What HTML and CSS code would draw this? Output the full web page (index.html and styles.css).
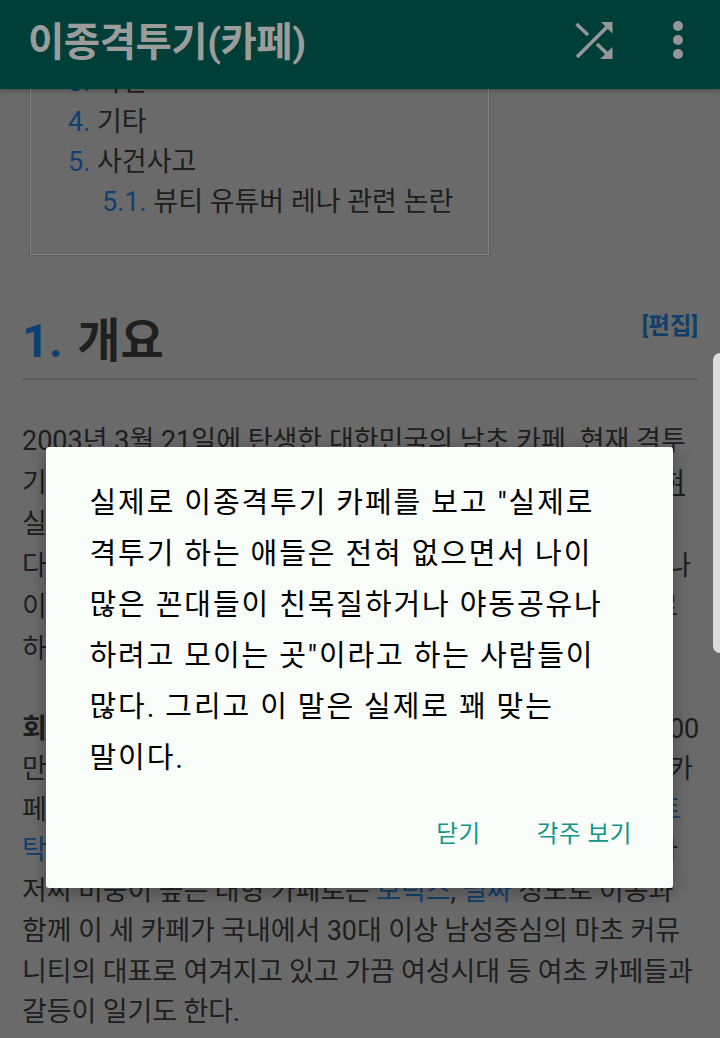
FILE: index.html
```html
<!DOCTYPE html>
<html lang="ko">
<head>
<meta charset="utf-8">
<title>이종격투기(카페)</title>
<link rel="stylesheet" href="styles.css">
</head>
<body>
<div class="screen">
  <header class="appbar">
    <h1 class="appbar-title">이종격투기(카페)</h1>
    <div class="appbar-actions">
      <svg class="icon-shuffle" viewBox="0 0 38 38" width="38" height="38" aria-hidden="true">
        <path d="M1.5 3 L13 14 M2 36 L33 5 M22 23 L33 33.5" fill="none" stroke="#969696" stroke-width="3.6"/>
        <path d="M26 1 H37.5 V12.5 Z M37.5 26 V38 H25 Z" fill="#969696"/>
      </svg>
      <div class="dots"><span></span><span></span><span></span></div>
    </div>
  </header>
  <main class="article">
    <nav class="toc">
      <div class="toc-row toc-cut"><span class="num">3.</span> 사건</div>
      <div class="toc-row"><span class="num">4.</span> 기타</div>
      <div class="toc-row"><span class="num">5.</span> 사건사고</div>
      <div class="toc-row toc-sub"><span class="num">5.1.</span> 뷰티 유튜버 레나 관련 논란</div>
    </nav>
    <div class="heading">
      <h2 class="heading-title"><span class="heading-num">1.</span> 개요</h2>
      <span class="edit">[편집]</span>
    </div>
    <section class="para para-first">
      <div class="line">2003년 3월 21일에 탄생한 대한민국의 남초 카페. 현재 격투</div>
      <div class="line split"><span>기</span><span class="under r13">혀</span></div>
      <div class="line split"><span>실</span><span class="r22">이</span></div>
      <div class="line split"><span>다</span><span class="r7">나</span></div>
      <div class="line split"><span>이</span><span class="r20">로</span></div>
      <div class="line split"><span>하</span></div>
    </section>
    <section class="para para-second">
      <div class="line split"><b>회</b><span class="r1">00</span></div>
      <div class="line split"><span>만</span><span class="r5">카</span></div>
      <div class="line split"><span>페</span><span class="link r17">트</span></div>
      <div class="line split"><span class="link">탁</span><span class="r20">나</span></div>
      <div class="line">저씨 비중이 높은 대형 카페로는 <span class="link">보릭스</span>, <span class="link">필싸</span> 정도로 이종과</div>
      <div class="line">함께 이 세 카페가 국내에서 30대 이상 남성중심의 마초 커뮤</div>
      <div class="line">니티의 대표로 여겨지고 있고 가끔 여성시대 등 여초 카페들과</div>
      <div class="line">갈등이 일기도 한다.</div>
    </section>
  </main>
  <div class="scrollbar"></div>
  <div class="dialog" role="dialog">
    <p class="dialog-text">실제로 이종격투기 카페를 보고 "실제로<br>격투기 하는 애들은 전혀 없으면서 나이<br>많은 꼰대들이 친목질하거나 야동공유나<br>하려고 모이는 곳"이라고 하는 사람들이<br>많다. 그리고 이 말은 실제로 꽤 맞는<br>말이다.</p>
    <div class="dialog-actions">
      <span class="dialog-btn">닫기</span>
      <span class="dialog-btn">각주 보기</span>
    </div>
  </div>
</div>
</body>
</html>
```
FILE: styles.css
```css
* { box-sizing: border-box; }
html, body { margin: 0; padding: 0; }
body { background: #6a6a6a; font-family: "Roboto", "Noto Sans CJK KR", sans-serif; }
.screen { position: relative; width: 720px; height: 1038px; overflow: hidden; background: #6a6a6a; }

.appbar { position: relative; z-index: 2; height: 89px; background: #003f38; display: flex; align-items: center; justify-content: space-between; padding: 0 37px 0 28px; box-shadow: 0 2px 4px rgba(0,0,0,.25); }
.appbar-title { margin: 0 0 4px; font-size: 39.5px; font-weight: 700; color: #9c9c9c; letter-spacing: -.5px; line-height: 1; }
.appbar-actions { display: flex; align-items: center; gap: 60px; margin-bottom: 9px; }
.icon-shuffle { display: block; }
.dots { display: flex; flex-direction: column; gap: 4px; }
.dots span { width: 10px; height: 10px; border-radius: 50%; background: #969696; }

.article { margin-top: -28px; padding: 0 22px; color: #1e1e1e; }
.toc { width: 459px; height: 194px; margin-left: 8px; border: 1px solid #828282; border-top: 0; box-shadow: 0 0 0 1px #5f5f5f; padding: 1px 0 0 37px; font-size: 27px; }
.toc-row { height: 40px; line-height: 40px; white-space: nowrap; }
.toc-sub { padding-left: 34px; }
.num { color: #123f6d; }
.heading { display: flex; justify-content: space-between; margin-top: 53px; height: 72px; border-bottom: 2px solid #5c5c5c; }
.heading-title { margin: 0; font-size: 47px; font-weight: 700; line-height: 66px; color: #1f1f1f; }
.heading-num { color: #0d3f70; margin-right: 3px; }
.edit { font-size: 23.5px; font-weight: 700; color: #123e69; line-height: 36px; }
.para { font-size: 27px; }
.para-first { margin-top: 41px; }
.para-first .line { height: 41.6px; line-height: 41.6px; }
.para-second { margin-top: 38px; letter-spacing: -.12px; }
.para-second .line { height: 40.5px; line-height: 40.5px; }
.line { white-space: nowrap; }
.split { display: flex; justify-content: space-between; }
.under { text-decoration: underline; }
.link { color: #123f6d; }
.r1 { margin-right: -1px; }
.r5 { margin-right: 5px; }
.r7 { margin-right: 7px; }
.r13 { margin-right: 13px; }
.r17 { margin-right: 17px; }
.r20 { margin-right: 20px; }
.r22 { margin-right: 22px; }

.scrollbar { position: absolute; z-index: 3; top: 353px; right: 0; width: 7px; height: 300px; background: #dcdcdc; border-radius: 7px 0 0 7px; }

.dialog { position: absolute; z-index: 4; left: 46px; top: 447px; width: 627px; height: 441px; background: #f9fdf9; border-radius: 3px; box-shadow: 0 4px 18px rgba(0,0,0,.3); padding: 31px 41px 0 43.5px; display: flex; flex-direction: column; }
.dialog-text { margin: 0; font-size: 29px; font-weight: 400; line-height: 51px; color: #000; white-space: nowrap; letter-spacing: 1.9px; }
.dialog-actions { display: flex; justify-content: flex-end; gap: 56px; margin-top: 30px; }
.dialog-btn { font-size: 23.5px; line-height: 40px; color: #0e9588; letter-spacing: .6px; }
```
